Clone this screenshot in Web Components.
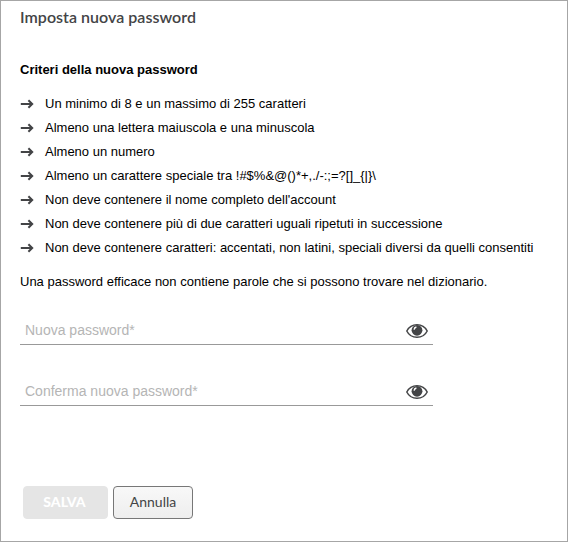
<!DOCTYPE html>
<html lang="it">
<head>
<meta charset="utf-8">
<title>Imposta nuova password</title>
<style>
  html, body { height: 100%; margin: 0; }
  body {
    background: #fff;
    color: #000;
    font-family: "Liberation Sans", Arial, sans-serif;
    font-size: 13px;
    overflow: hidden;
  }
</style>
</head>
<body>
  <password-panel>
    <span slot="title">Imposta nuova password</span>
    <criteria-list slot="criteria">
      <span slot="heading">Criteri della nuova password</span>
      <criteria-item>Un minimo di 8 e un massimo di 255 caratteri</criteria-item>
      <criteria-item>Almeno una lettera maiuscola e una minuscola</criteria-item>
      <criteria-item>Almeno un numero</criteria-item>
      <criteria-item>Almeno un carattere speciale tra !#$%&amp;@()*+,./-:;=?[]_{|}\</criteria-item>
      <criteria-item>Non deve contenere il nome completo dell'account</criteria-item>
      <criteria-item>Non deve contenere più di due caratteri uguali ripetuti in successione</criteria-item>
      <criteria-item>Non deve contenere caratteri: accentati, non latini, speciali diversi da quelli consentiti</criteria-item>
      <span slot="note">Una password efficace non contiene parole che si possono trovare nel dizionario.</span>
    </criteria-list>
    <password-field>Nuova password*</password-field>
    <password-field>Conferma nuova password*</password-field>
    <action-button slot="actions" disabled>SALVA</action-button>
    <action-button slot="actions">Annulla</action-button>
  </password-panel>

<script>
class PasswordPanel extends HTMLElement {
  constructor() {
    super();
    this.attachShadow({ mode: "open" });
    this.shadowRoot.innerHTML = `
    <style>
      :host {
        display: block;
        box-sizing: border-box;
        height: 100%;
        padding: 5px 19px 0;
        border: 1px solid #a6a6a6;
      }
      h1 {
        margin: 0 0 35px;
        font: 600 16px/22px Lato, sans-serif;
        letter-spacing: 0.03px;
        color: #434446;
      }
      .fields {
        display: flex;
        flex-direction: column;
        gap: 27px;
        width: 413px;
        margin-top: 22px;
      }
      .actions {
        display: flex;
        gap: 5px;
        margin: 80px 0 0 3px;
      }
    </style>
    <h1><slot name="title"></slot></h1>
    <slot name="criteria"></slot>
    <div class="fields"><slot></slot></div>
    <div class="actions"><slot name="actions"></slot></div>
    `;
  }
}

class CriteriaList extends HTMLElement {
  constructor() {
    super();
    this.attachShadow({ mode: "open" });
    this.shadowRoot.innerHTML = `
    <style>
      :host { display: block; }
      h2, p { margin: 0; font-size: 13px; line-height: 14px; }
      .items { margin: 14px 0 16px; }
      p { white-space: nowrap; }
    </style>
    <h2><slot name="heading"></slot></h2>
    <div class="items" role="list"><slot></slot></div>
    <p><slot name="note"></slot></p>
    `;
  }
}

class CriteriaItem extends HTMLElement {
  constructor() {
    super();
    this.attachShadow({ mode: "open" });
    this.shadowRoot.innerHTML = `
    <style>
      :host {
        display: flex;
        align-items: center;
        height: 24px;
        white-space: nowrap;
      }
      svg { flex: none; margin: 1px 11px 0 0; }
    </style>
    <svg width="14" height="10" viewBox="0 0 14 10" fill="none" stroke="#434446" stroke-width="2" aria-hidden="true">
      <path d="M.8 5h11.4M8.4 1.3L12.2 5L8.4 8.7"/>
    </svg>
    <span><slot></slot></span>
    `;
  }

  connectedCallback() {
    this.setAttribute("role", "listitem");
  }
}

class PasswordField extends HTMLElement {
  constructor() {
    super();
    this.attachShadow({ mode: "open" });
    this.shadowRoot.innerHTML = `
    <style>
      :host {
        display: flex;
        align-items: center;
        justify-content: space-between;
        box-sizing: border-box;
        height: 34px;
        padding: 5px 5px 0;
        border-bottom: 1px solid #999;
        font-size: 14px;
        color: #b5b5b5;
      }
      .eye { display: flex; padding: 2px 0 0; border: 0; background: none; }
    </style>
    <span><slot></slot></span>
    <button class="eye" aria-label="Mostra password">
      <svg width="22" height="16" viewBox="0 0 22 16" aria-hidden="true">
        <path d="M.8 8C5 -.4 17 -.4 21.2 8C17 16.4 5 16.4 .8 8Z" fill="#fff" stroke="#434446" stroke-width="1.5"/>
        <circle cx="11" cy="7.3" r="5.4" fill="#434446"/>
        <path d="M8.1 6.6A3 3 0 0 1 10.4 4" fill="none" stroke="#fff" stroke-width="1.4"/>
      </svg>
    </button>
    `;
  }
}

class ActionButton extends HTMLElement {
  constructor() {
    super();
    this.attachShadow({ mode: "open" });
    this.shadowRoot.innerHTML = `
    <style>
      :host { display: block; }
      button {
        box-sizing: border-box;
        width: 80px;
        height: 33px;
        padding: 0 0 1px;
        border: 1px solid #777;
        border-radius: 4px;
        background: linear-gradient(#f8f8f8, #eee);
        color: #434446;
        font: 14px/20px Lato, sans-serif;
      }
      :host([disabled]) button {
        width: 85px;
        padding-right: 2px;
        border-color: #e5e5e5;
        background: #e5e5e5;
        color: #fff;
        font-weight: 900;
      }
    </style>
    <button><slot></slot></button>
    `;
  }

  connectedCallback() {
    this.shadowRoot.querySelector("button").disabled = this.hasAttribute("disabled");
  }
}

customElements.define("password-panel", PasswordPanel);
customElements.define("criteria-list", CriteriaList);
customElements.define("criteria-item", CriteriaItem);
customElements.define("password-field", PasswordField);
customElements.define("action-button", ActionButton);
</script>
</body>
</html>
